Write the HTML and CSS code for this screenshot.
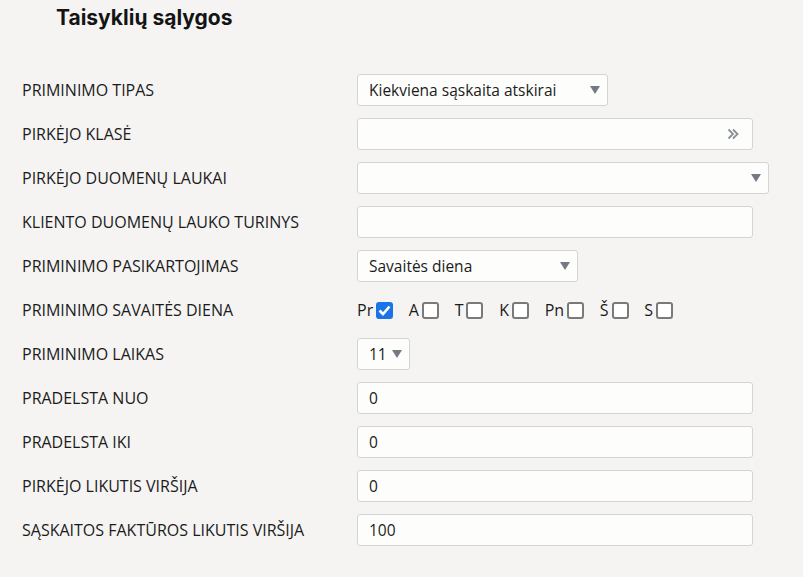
FILE: index.html
```html
<!DOCTYPE html>
<html lang="lt">
<head>
<meta charset="utf-8">
<title>Taisyklių sąlygos</title>
<link rel="stylesheet" href="styles.css">
</head>
<body>
<div class="page">
  <h2 class="title">Taisyklių sąlygos</h2>
  <div class="form">
    <div class="label">PRIMINIMO TIPAS</div>
    <div class="ctl"><div class="select w-tipas"><span>Kiekviena sąskaita atskirai</span><i class="tri"></i></div></div>

    <div class="label">PIRKĖJO KLASĖ</div>
    <div class="ctl"><div class="input w-full"><span></span>
      <svg class="dbl" width="12" height="12" viewBox="0 0 12 12"><path d="M1.5 1.5 L6 6 L1.5 10.5 M6 1.5 L10.5 6 L6 10.5" fill="none" stroke="#8a8f98" stroke-width="1.8"/></svg>
    </div></div>

    <div class="label">PIRKĖJO DUOMENŲ LAUKAI</div>
    <div class="ctl"><div class="select w-wide"><span></span><i class="tri"></i></div></div>

    <div class="label">KLIENTO DUOMENŲ LAUKO TURINYS</div>
    <div class="ctl"><div class="input w-full"><span></span></div></div>

    <div class="label">PRIMINIMO PASIKARTOJIMAS</div>
    <div class="ctl"><div class="select w-pasik"><span>Savaitės diena</span><i class="tri"></i></div></div>

    <div class="label">PRIMINIMO SAVAITĖS DIENA</div>
    <div class="ctl days">
      <label class="day">Pr<span class="cb checked"><svg width="13" height="11" viewBox="0 0 13 11"><path d="M1.5 5.5 L5 9 L11.5 1.5" fill="none" stroke="#fff" stroke-width="2.6"/></svg></span></label>
      <label class="day">A<span class="cb"></span></label>
      <label class="day">T<span class="cb"></span></label>
      <label class="day">K<span class="cb"></span></label>
      <label class="day">Pn<span class="cb"></span></label>
      <label class="day">Š<span class="cb"></span></label>
      <label class="day">S<span class="cb"></span></label>
    </div>

    <div class="label">PRIMINIMO LAIKAS</div>
    <div class="ctl"><div class="select w-laikas"><span>11</span><i class="tri"></i></div></div>

    <div class="label">PRADELSTA NUO</div>
    <div class="ctl"><div class="input w-full"><span>0</span></div></div>

    <div class="label">PRADELSTA IKI</div>
    <div class="ctl"><div class="input w-full"><span>0</span></div></div>

    <div class="label">PIRKĖJO LIKUTIS VIRŠIJA</div>
    <div class="ctl"><div class="input w-full"><span>0</span></div></div>

    <div class="label">SĄSKAITOS FAKTŪROS LIKUTIS VIRŠIJA</div>
    <div class="ctl"><div class="input w-full"><span>100</span></div></div>
  </div>
</div>
</body>
</html>
```

FILE: styles.css
```css
* { box-sizing: border-box; }
html, body {
  margin: 0;
  background: #f5f4f3;
  color: #1b1b1b;
  font-family: "Open Sans", "Liberation Sans", sans-serif;
}
.page {
  padding: 6px 0 0 22px;
  height: 577px;
  overflow: hidden;
}
.title {
  margin: 0 0 44px 34px;
  font-family: Inter, "Open Sans", sans-serif;
  font-weight: 700;
  font-size: 21px;
  line-height: 24px;
  color: #141414;
}
.form {
  display: grid;
  grid-template-columns: 335px 1fr;
  grid-auto-rows: 32px;
  row-gap: 12px;
}
.label {
  display: flex;
  align-items: center;
  font-size: 16px;
  white-space: nowrap;
}
.ctl {
  display: flex;
  align-items: center;
}
.input, .select {
  height: 32px;
  background: #fdfefc;
  border: 1px solid #d4d4d4;
  border-radius: 3px;
  display: flex;
  align-items: center;
  padding: 0 11px;
  font-size: 15.5px;
  color: #1b1b1b;
}
.input span, .select span { flex: 1; white-space: nowrap; }
.w-full { width: 396px; }
.w-tipas { width: 251px; }
.w-wide { width: 412px; }
.w-pasik { width: 221px; }
.w-laikas { width: 53px; }
.tri {
  width: 0; height: 0;
  border-left: 5px solid transparent;
  border-right: 5px solid transparent;
  border-top: 8px solid #747a84;
  margin-right: -4px;
}
.dbl { margin-right: 2px; }
.day {
  display: flex;
  align-items: center;
  font-size: 16px;
  margin-right: 15.7px;
}
.cb {
  width: 17px;
  height: 17px;
  margin-left: 3px;
  border: 2px solid #7a7a7a;
  border-radius: 3px;
  background: #fff;
  display: flex;
  align-items: center;
  justify-content: center;
}
.cb.checked {
  background: #1a74e8;
  border-color: #1a74e8;
}
```
